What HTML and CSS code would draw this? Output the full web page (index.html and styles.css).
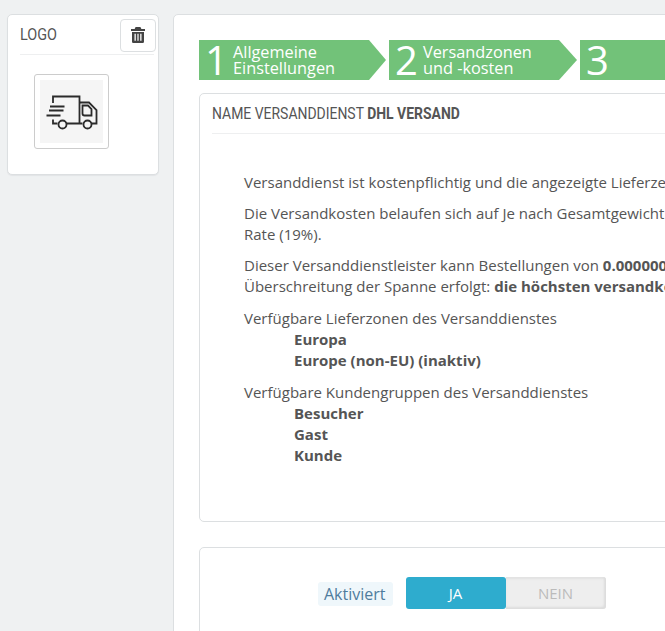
FILE: index.html
```html
<!DOCTYPE html>
<html lang="de">
<head>
<meta charset="utf-8">
<title>Versanddienst</title>
<link rel="stylesheet" href="styles.css">
</head>
<body>
<div class="page">
  <aside class="logo-card">
    <div class="logo-head">
      <span class="logo-title">LOGO</span>
      <button class="trash" type="button" aria-label="Löschen">
        <svg width="14" height="16" viewBox="0 0 14 16"><path fill="#444" d="M4.6 0h4.8l1 2H14v2H0V2h3.6zM1 5h12v9.4c0 .9-.7 1.6-1.6 1.6H2.6C1.7 16 1 15.300 1 14.400zm2.500 1.800v7h1.300v-7zm2.900 0v7h1.200v-7zm2.800 0v7h1.300v-7z"/></svg>
      </button>
    </div>
    <div class="thumb">
      <div class="thumb-inner">
        <svg width="52" height="36" viewBox="0 0 52 36" fill="none" stroke="#2b2b2b" stroke-width="1.800">
          <path d="M7 9V2.500h26.500V29.500H21M33.500 8.500H43L50.500 16V29.500H46M33.500 29.500H36.500"/>
          <path d="M36.500 11.500H42L45.500 15V21.500H38.500a2 2 0 0 1-2-2z"/>
          <path d="M4 12.500H18.500M3 16.500H17.500M0.500 21.500H14.500"/>
          <path d="M7 25.500V29.500H11.500"/>
          <circle cx="16.500" cy="30.500" r="4"/><circle cx="41.500" cy="30.500" r="4"/>
        </svg>
      </div>
    </div>
  </aside>
  <main class="main">
    <ol class="steps">
      <li class="step step-first"><span class="num">1</span><span class="label">Allgemeine<br>Einstellungen</span></li>
      <li class="step"><span class="num">2</span><span class="label">Versandzonen<br>und -kosten</span></li>
      <li class="step step-last"><span class="num">3</span></li>
    </ol>
    <section class="panel summary">
      <h2 class="panel-head"><span class="panel-title">NAME VERSANDDIENST <b>DHL VERSAND</b></span></h2>
      <div class="panel-body">
        <p>Versanddienst ist kostenpflichtig und die angezeigte Lieferzeit beträgt: 1-3 Tage.</p>
        <p>Die Versandkosten belaufen sich auf Je nach Gesamtgewicht und die Steuerregel lautet:<br>Rate (19%).</p>
        <p class="last">Dieser Versanddienstleister kann Bestellungen von <b>0.000000 kg</b> bis <b>30.000000 kg</b> liefern. Bei<br>Überschreitung der Spanne erfolgt: <b>die höchsten versandkosten anwenden</b></p>
        <div class="group">Verfügbare Lieferzonen des Versanddienstes
          <ul><li>Europa</li><li>Europe (non-EU) (inaktiv)</li></ul>
        </div>
        <div class="group">Verfügbare Kundengruppen des Versanddienstes
          <ul><li>Besucher</li><li>Gast</li><li>Kunde</li></ul>
        </div>
      </div>
    </section>
    <section class="panel status">
      <span class="status-label">Aktiviert</span>
      <div class="switch"><span class="switch-on">JA</span><span class="switch-off">NEIN</span></div>
    </section>
  </main>
</div>
</body>
</html>
```
FILE: styles.css
```css
html, body { margin: 0; height: 100%; overflow: hidden; }
body { background: #eff1f2; font-family: "Open Sans", sans-serif; font-size: 15px; line-height: 21px; color: #555; }
.page { display: flex; align-items: flex-start; gap: 14px; padding: 14px 0 0 7px; width: 1100px; }
.logo-card { width: 152px; height: 161px; box-sizing: border-box; background: #fff; border: 1px solid #dcdfe1; border-radius: 5px; box-shadow: 0 1px 1px #e2e4e6; padding: 0 4px 0 12px; flex: none; }
.logo-head { display: flex; justify-content: space-between; align-items: center; height: 39px; border-bottom: 1px solid #eeeff0; }
.logo-title { font-family: "Roboto", sans-serif; font-size: 17px; color: #555; display: inline-block; transform: scaleX(.85); transform-origin: left center; }
.trash { width: 36px; height: 33px; margin: 3px -2px 2px 0; padding: 0; display: flex; align-items: center; justify-content: center; background: #fff; border: 1px solid #dcdfe1; border-radius: 4px; }
.thumb { width: 75px; height: 75px; box-sizing: border-box; margin: 19px 0 0 14px; padding: 5px; border: 1px solid #ccc; border-radius: 3px; background: #fff; }
.thumb-inner { height: 63px; background: #f5f5f5; display: flex; align-items: center; justify-content: center; }
.main { width: 900px; height: 640px; box-sizing: border-box; background: #fff; border: 1px solid #dcdfe1; border-radius: 5px; padding: 25px 25px 0; flex: none; }
.steps { list-style: none; display: flex; gap: 3px; margin: 0 0 13px; padding: 0; color: #fff; }
.step { width: 188px; height: 40px; box-sizing: border-box; background: #72c279; display: flex; align-items: center; padding-left: 6px; clip-path: polygon(0 0, 170px 0, 100% 50%, 170px 100%, 0 100%); }
.step-first { width: 187px; }
.step-last { width: 300px; clip-path: none; }
.num { font-size: 40px; line-height: 40px; width: 28px; flex: none; }
.label { font-size: 16.300px; line-height: 16px; }
.panel { width: 850px; box-sizing: border-box; border: 1px solid #dcdfe1; border-radius: 5px; background: #fff; }
.summary { height: 429px; padding: 0 12px; margin-bottom: 25px; }
.panel-head { margin: 0; height: 39px; font-size: 17px; line-height: 38px; font-weight: 400; color: #555; border-bottom: 1px solid #eeeff0; }
.panel-title { font-family: "Roboto", sans-serif; display: inline-block; white-space: nowrap; transform: scaleX(.82); transform-origin: left center; }
.panel-body { padding: 38px 0 0 32px; }
.panel-body p { margin: 0 0 10px; }
.panel-body .last { margin-bottom: 11px; }
.group { margin-bottom: 11px; }
.group ul { list-style: none; margin: 0; padding: 0 0 0 50px; font-weight: 700; }
.status { height: 120px; display: flex; align-items: flex-start; padding: 29px 0 0 118px; }
.status-label { font-size: 16px; line-height: 24px; margin: 5px 13px 0 0; padding: 0 7px 0 6px; background: #eff7fb; color: #4f7c9d; border-radius: 3px; }
.switch { display: flex; width: 200px; height: 32px; font-size: 15px; line-height: 32px; text-align: center; }
.switch-on { flex: 1; background: #2eacce; color: #fff; border-radius: 3px; }
.switch-off { flex: 1; background: #eee; color: #bbb; border-radius: 0 3px 3px 0; box-shadow: inset -2px -2px 2px #ddd, inset 0 2px 2px #e2e2e2; }
```
